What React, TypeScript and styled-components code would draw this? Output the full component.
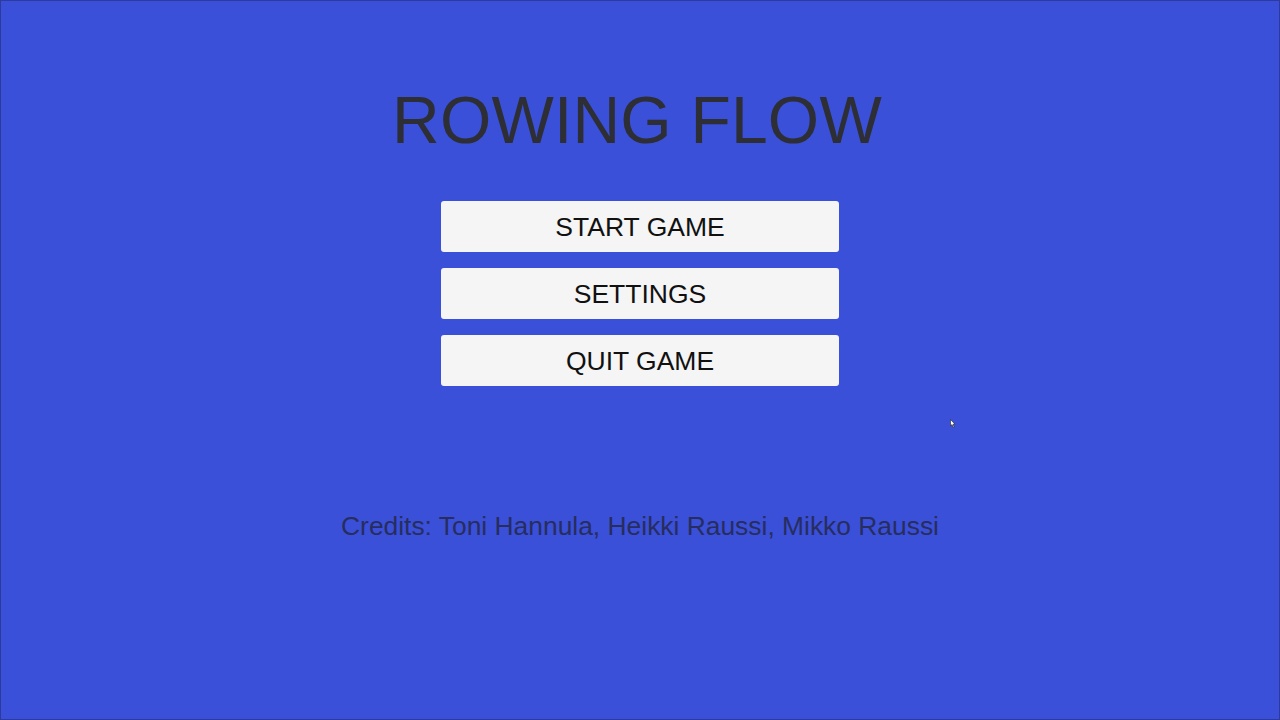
import React from 'react';
import styled, { createGlobalStyle } from 'styled-components';

const GlobalStyle = createGlobalStyle`
  html, body {
    margin: 0;
    padding: 0;
    background: #3a50d8;
  }
  * {
    box-sizing: border-box;
  }
`;

const Screen = styled('div')`
  position: relative;
  width: 1280px;
  height: 720px;
  background: #3a50d8;
  border: 1px solid #2c3b9c;
  display: flex;
  flex-direction: column;
  align-items: center;
  font-family: 'Liberation Sans', Arial, sans-serif;
  overflow: hidden;
`;

const Title = styled('h1')`
  margin: 80px 0 0 -6px;
  font-weight: normal;
  font-size: 66px;
  line-height: 78px;
  color: #2e2e35;
  letter-spacing: 0.2px;
`;

const Menu = styled('div')`
  margin-top: 42px;
  display: flex;
  flex-direction: column;
  gap: 16px;
`;

const MenuButton = styled('button')`
  width: 398px;
  height: 51px;
  border: none;
  border-radius: 3px;
  background: #f5f5f5;
  color: #111111;
  font-family: 'Liberation Sans', Arial, sans-serif;
  font-size: 26.5px;
  padding: 2px 0 0 0;
  cursor: pointer;
  display: flex;
  align-items: center;
  justify-content: center;
  &:hover {
    background: #ffffff;
  }
`;

const Credits = styled('p')`
  margin: 125px 0 0 0;
  font-size: 26.4px;
  color: #272d5e;
`;

const Cursor = styled('svg')`
  position: absolute;
  left: 949px;
  top: 418px;
`;

export default function App() {
  return (
    <>
      <GlobalStyle />
      <Screen>
        <Title>ROWING FLOW</Title>
        <Menu>
          <MenuButton>START GAME</MenuButton>
          <MenuButton>SETTINGS</MenuButton>
          <MenuButton>QUIT GAME</MenuButton>
        </Menu>
        <Credits>Credits: Toni Hannula, Heikki Raussi, Mikko Raussi</Credits>
        <Cursor width="6" height="9" viewBox="0 0 6 9">
          <path d="M0.5 0.5 L0.5 7 L2 5.6 L3.2 8.3 L4.2 7.9 L3 5.2 L5 5.2 Z" fill="#ffffff" stroke="#222" strokeWidth="0.6" />
        </Cursor>
      </Screen>
    </>
  );
}
